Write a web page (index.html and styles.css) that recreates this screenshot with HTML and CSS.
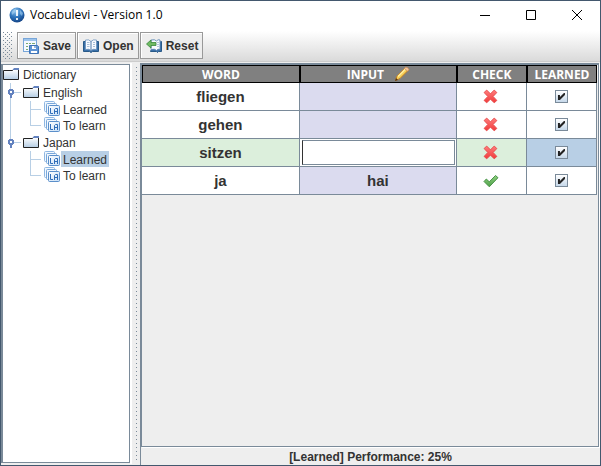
FILE: index.html
```html
<!DOCTYPE html>
<html lang="en">
<head>
<meta charset="utf-8">
<meta name="viewport" content="width=device-width, initial-scale=1">
<title>Vocabulevi - Version 1.0</title>
<link rel="stylesheet" href="styles.css">
</head>
<body>
<svg class="defs" aria-hidden="true">
  <defs>
    <linearGradient id="gFolder" x1="0" y1="0" x2="0" y2="1"><stop offset="0" stop-color="#fff"/><stop offset="1" stop-color="#b8cfe5"/></linearGradient>
    <linearGradient id="gSheet" x1="0" y1="0" x2="1" y2="1"><stop offset="0" stop-color="#fff"/><stop offset="1" stop-color="#c6def6"/></linearGradient>
    <radialGradient id="gBall" cx=".4" cy=".25" r=".8"><stop offset="0" stop-color="#8fc4ee"/><stop offset=".5" stop-color="#2f75bd"/><stop offset="1" stop-color="#123f80"/></radialGradient>
    <linearGradient id="gCheck" x1="0" y1="0" x2="0" y2="1"><stop offset="0" stop-color="#8fd07f"/><stop offset="1" stop-color="#4fa04a"/></linearGradient>
    <linearGradient id="gCross" x1="0" y1="0" x2="0" y2="1"><stop offset="0" stop-color="#ff7d7d"/><stop offset="1" stop-color="#f03a3a"/></linearGradient>
    <symbol id="folder" viewBox="0 0 16 16">
      <path d="M9 4.500 11 2h5v2.500z" fill="#6382bf"/>
      <path d="M1 4.500h8.500l1-1H15V13H1z" fill="url(#gFolder)"/>
      <path d="M.5 13.500v-9h9l1-1M.5 13.500h15V3" fill="none" stroke="#222"/>
      <path d="M11 2.500h5M10 3.500h6" stroke="#6382bf"/>
    </symbol>
    <symbol id="cards" viewBox="0 0 16 16">
      <rect x=".5" y=".5" width="10" height="10" rx="1" fill="#f2f8fe" stroke="#8fb7e2"/>
      <rect x="2.500" y="2.500" width="10" height="10" rx="1" fill="#f2f8fe" stroke="#79a8da"/>
      <rect x="4.500" y="4.500" width="11" height="10" rx="1" fill="url(#gSheet)" stroke="#5b8fca"/>
      <path d="M6.500 7v5.500H9M10.500 13V8.500l1-1h2V13M11 10.500h2" fill="none" stroke="#2f6db8"/>
    </symbol>
    <symbol id="cross" viewBox="1 1 15 15">
      <path d="M4.500 2 8 5.500 11.500 2 14 4.300 10.500 8l3.500 3.700-2.500 2.300L8 10.500 4.500 14 2 11.700 5.500 8 2 4.300z" fill="url(#gCross)" stroke="#e54848" stroke-width=".8" stroke-linejoin="round"/>
    </symbol>
    <symbol id="tick" viewBox="0 0 16 16">
      <path d="M1 8.500 3.300 6 6.300 8.800 12.500 2.500l2.500 2.200L6.300 13.800z" fill="url(#gCheck)" stroke="#3d8b3d" stroke-width=".9" stroke-linejoin="round"/>
    </symbol>
  </defs>
</svg>
<div class="window">
  <header class="titlebar">
    <svg class="icon" viewBox="0 0 16 16" aria-hidden="true"><circle cx="8" cy="8" r="7.500" fill="url(#gBall)"/><path d="M2.500 5Q4 2 7 1.500L6 5 3 8zM11 3l3 3-1 3-2-2z" fill="#b5dbf5" opacity=".55"/><path d="M8 3v6M8 11v2" stroke="#fff" stroke-width="1.800"/></svg>
    <h1 class="title">Vocabulevi - Version 1.0</h1>
    <button class="caption" type="button" aria-label="Minimize"><svg viewBox="0 0 10 10"><path d="M0 5.500h10"/></svg></button>
    <button class="caption" type="button" aria-label="Maximize"><svg viewBox="0 0 10 10"><path d="M.5.5h9v9h-9z"/></svg></button>
    <button class="caption" type="button" aria-label="Close"><svg viewBox="0 0 10 10"><path d="M0 0 10 10M10 0 0 10"/></svg></button>
  </header>
  <nav class="toolbar" aria-label="Main">
    <span class="grip"></span>
    <button class="tool" type="button"><svg class="icon" viewBox="0 0 16 16" aria-hidden="true"><rect x=".5" y=".5" width="13" height="13" fill="#f4f9ff" stroke="#78a6d8"/><path d="M1 2h12" stroke="#9dc4ec" stroke-width="2"/><path d="M3 5.500h2M6 5.500h2M9 5.500h3M3 8.500h2M3 11.500h2" stroke="#7cab72"/><path d="M6.500 7.500h8l1 1v7h-9z" fill="#5f94d4" stroke="#3e73b6"/><path d="M9 8h4v3H9zM8 13h6v2H8z" fill="#fff"/><path d="M12 8v2" stroke="#3e73b6"/></svg>Save</button>
    <button class="tool" type="button"><svg class="icon" viewBox="0 0 16 16" aria-hidden="true"><path d="M.5 3.500h15v10H9.500L8 14.500 6.500 13.500H.5z" fill="#3a70a9" stroke="#285987"/><path d="M2.500 2Q6 1 8 3.500 10 1 13.500 2v9.500Q10 10.500 8 12.500 6 10.500 2.500 11.500z" fill="#f8fbff" stroke="#6c93bd" stroke-width=".8"/><path d="M8 3.500v9" stroke="#507ba8"/><path d="M4 4.500h2.500M4 6.500h2.500M4 8.500h2.500M10 4.500h2M10 6.500h2M10 8.500h2" stroke="#a9bfd6"/></svg>Open</button>
    <button class="tool" type="button"><svg class="icon" viewBox="0 0 16 16" aria-hidden="true"><path d="M4.500 12.500v1h6l1 1 1-1h3v-10h-1" fill="#3a70a9" stroke="#285987"/><path d="M5 2q4-1 5.500 1Q12 1 14 2v9.500q-2-1-3.500 1-1.500-2-5.500-1z" fill="#f8fbff" stroke="#4f7eac" stroke-width=".8"/><path d="M12 4v6" stroke="#6f93b8" stroke-dasharray="1 1"/><path d="M.5 6 5 2v2.500h5v3H5V10z" fill="#6fba62" stroke="#37873a" stroke-width=".8"/></svg>Reset</button>
  </nav>
  <main class="split">
    <aside class="tree" aria-label="Dictionary">
      <div class="node root"><svg class="icon"><use href="#folder"/></svg><span class="label">Dictionary</span></div>
      <ul class="langs">
        <li>
          <div class="node"><svg class="icon"><use href="#folder"/></svg><span class="label">English</span></div>
          <ul class="leaves">
            <li class="node"><svg class="icon"><use href="#cards"/></svg><span class="label">Learned</span></li>
            <li class="node"><svg class="icon"><use href="#cards"/></svg><span class="label">To learn</span></li>
          </ul>
        </li>
        <li>
          <div class="node"><svg class="icon"><use href="#folder"/></svg><span class="label">Japan</span></div>
          <ul class="leaves">
            <li class="node"><svg class="icon"><use href="#cards"/></svg><span class="label selected">Learned</span></li>
            <li class="node"><svg class="icon"><use href="#cards"/></svg><span class="label">To learn</span></li>
          </ul>
        </li>
      </ul>
    </aside>
    <div class="divider"></div>
    <section class="content">
      <div class="scroll">
        <table class="words">
          <colgroup><col class="c-word"><col class="c-input"><col class="c-check"><col class="c-learned"></colgroup>
          <thead>
            <tr><th>WORD</th><th><span class="head">INPUT<svg class="icon" viewBox="0 0 16 16" aria-hidden="true"><path d="M1.500 14.500 3 10 11 2q2-1 3.500 2L6 12.500z" fill="#f7cf58" stroke="#c27f25"/><path d="M4 10.500 11.500 3" stroke="#fff0a4" stroke-width="1.500"/><path d="m10.500 2.500 1-1.300q2.500-.5 3.500 2.500l-1.500 1.500z" fill="#f4c4a0" stroke="#c98a55" stroke-width=".7"/><path d="m1 15 1-3 2 2z" fill="#553414"/></svg></span></th><th>CHECK</th><th>LEARNED</th></tr>
          </thead>
          <tbody>
            <tr><td>fliegen</td><td class="answer"></td><td><svg class="icon" role="img" aria-label="Wrong"><use href="#cross"/></svg></td><td><input type="checkbox" aria-label="fliegen learned" checked></td></tr>
            <tr><td>gehen</td><td class="answer"></td><td><svg class="icon" role="img" aria-label="Wrong"><use href="#cross"/></svg></td><td><input type="checkbox" aria-label="gehen learned" checked></td></tr>
            <tr class="current"><td>sitzen</td><td class="editing"><span class="editor"><input type="text" aria-label="Answer for sitzen"></span></td><td><svg class="icon" role="img" aria-label="Wrong"><use href="#cross"/></svg></td><td class="focus"><input type="checkbox" aria-label="sitzen learned" checked></td></tr>
            <tr><td>ja</td><td class="answer">hai</td><td><svg class="icon" role="img" aria-label="Right"><use href="#tick"/></svg></td><td><input type="checkbox" aria-label="ja learned" checked></td></tr>
          </tbody>
        </table>
      </div>
      <footer class="status">[Learned] Performance: 25%</footer>
    </section>
  </main>
</div>
</body>
</html>
```
FILE: styles.css
```css
* { box-sizing: border-box; }

body {
  margin: 0;
  font: 12px/16px "Liberation Sans", Arial, sans-serif;
  color: #333;
}

.defs { position: absolute; width: 0; height: 0; }

.icon { display: block; width: 16px; height: 16px; flex: none; }

.window {
  display: flex;
  flex-direction: column;
  height: 100vh;
  border: 1px solid #43586e;
  background: #eee;
}

/* Title bar */
.titlebar {
  display: flex;
  align-items: center;
  height: 30px;
  padding: 0 0 2px 8px;
  background: #fff;
}

.title {
  flex: 1;
  margin: 0 0 0 5px;
  font: 12px/16px "Open Sans", "Noto Sans", sans-serif;
  color: #000;
}

.caption {
  display: grid;
  place-items: center;
  width: 46px;
  height: 28px;
  padding: 0;
  border: 0;
  background: none;
}

.caption svg { width: 10px; height: 10px; fill: none; stroke: #000; }

/* Toolbar */
.toolbar {
  display: flex;
  gap: 1px;
  height: 31px;
  padding: 1px 0 2px 2px;
  border-bottom: 1px solid #ccc;
  background: linear-gradient(#fff, #dadada);
}

/* Staggered 1px dots on a 4px raster */
.grip,
.divider {
  background-image:
    conic-gradient(from 270deg at 1px 1px, #7a8a99 25%, transparent 0),
    conic-gradient(from 270deg at 1px 1px, #7a8a99 25%, transparent 0);
  background-size: 4px 4px;
  background-position: 0 0, 2px 2px;
  background-clip: content-box;
}

.grip { width: 13px; padding-right: 3px; }

.tool {
  display: flex;
  align-items: center;
  gap: 4px;
  padding: 0 4px 0 5px;
  border: 1px solid #999;
  box-shadow: inset 1px 1px #fff;
  background: #eee;
  font: bold 12px/16px "Liberation Sans", Arial, sans-serif;
  color: #333;
}

/* Split pane */
.split {
  display: flex;
  flex: 1;
  min-height: 0;
  padding-top: 1px;
}

.tree {
  width: 129px;
  margin: 1px 0 2px;
  border: 1px solid #7a8a99;
  border-left-width: 2px;
  background: #fff;
}

.tree ul { margin: 0; padding: 0; list-style: none; }

.node { display: flex; align-items: center; gap: 2px; height: 16px; }

.langs > li > .node, .root { height: 18px; }

.label { padding: 2px 2px 0; line-height: 14px; }

.selected { background: #b8cfe5; }

.langs > li { position: relative; padding-left: 20px; }

.langs > li::before {
  content: "";
  position: absolute;
  top: 0;
  bottom: 0;
  left: 7px;
  width: 10px;
  border-left: 1px solid #b8cfe5;
  background: linear-gradient(#b8cfe5, #b8cfe5) 0 9px / 10px 1px no-repeat;
}

.langs > li:last-child::before { bottom: auto; height: 10px; }

/* Expand handle: a ring with a short stem */
.langs > li::after {
  content: "";
  position: absolute;
  top: 6px;
  left: 5px;
  width: 6px;
  height: 9px;
  background:
    linear-gradient(#6382bf, #6382bf) 2px 6px / 2px 3px no-repeat,
    radial-gradient(circle at 3px 3px, #fff 1px, #6382bf 1px, #6382bf 3px, transparent 3px);
}

.leaves > li { position: relative; padding-left: 21px; gap: 1px; }

.leaves > li::before {
  content: "";
  position: absolute;
  top: 0;
  left: 7px;
  width: 10px;
  height: 100%;
  border-left: 1px solid #b8cfe5;
  background: linear-gradient(#b8cfe5, #b8cfe5) 0 8px / 10px 1px no-repeat;
}

.leaves > li:last-child::before { height: 9px; }

.divider {
  width: 10px;
  margin-bottom: 1px;
  padding: 1px 2px 1px 3px;
  border-left: 2px solid #fff;
}

.content {
  display: flex;
  flex: 1;
  flex-direction: column;
  min-width: 0;
  border-left: 1px solid #7a8a99;
}

.scroll {
  flex: 1;
  margin-right: 1px;
  border: 1px solid #7a8a99;
  border-top-width: 2px;
  box-shadow: 1px 1px #fff;
}

/* Word table */
.words {
  width: calc(100% - 1px);
  border-collapse: separate;
  border-spacing: 0;
  table-layout: fixed;
}

.c-word { width: 34.700%; }
.c-input { width: 34.500%; }
.c-check, .c-learned { width: 15.400%; }

.words th {
  height: 18px;
  padding: 2px 0 0;
  border: 1px solid #000;
  background: #808080;
  font: bold 12px/14px "Open Sans", "Noto Sans", sans-serif;
  color: #fff;
}

.head { display: flex; justify-content: center; gap: 10px; }

.head .icon { margin: -2px 0 0; }

.words td {
  height: 28px;
  padding: 0;
  border-right: 1px solid #7a8a99;
  border-bottom: 1px solid #7a8a99;
  background: #fff;
  text-align: center;
  font: bold 15px/18px "Liberation Sans", Arial, sans-serif;
}

.words td .icon { margin: 0 auto; }

.words .answer { background: #dbdbef; }
.words .current td { background: #dcefdc; }
.words .current .editing { background: #fff; }
.words .current .focus { background: #b8cfe5; }

.editor {
  display: block;
  height: 27px;
  padding: 1px 1px 1px 2px;
}

.editor input {
  display: block;
  width: 100%;
  height: 25px;
  padding: 0 2px;
  border: 1px solid #7a8a99;
  border-left-color: #333;
  outline: 0;
  background: #fff;
  font: inherit;
  text-align: left;
}

input[type="checkbox"] {
  appearance: none;
  display: block;
  width: 13px;
  height: 13px;
  margin: 0 auto;
  border: 1px solid #7a8a99;
  background: linear-gradient(#fff, #c6d8ea);
}

input[type="checkbox"]:checked::before {
  content: "";
  display: block;
  width: 11px;
  height: 11px;
  background: #222;
  clip-path: polygon(2px 4px, 4px 4px, 4px 6px, 8px 2px, 9px 2px, 9px 4px, 4px 9px, 2px 9px);
}

.status {
  height: 18px;
  padding-top: 2px;
  text-align: center;
  font-weight: bold;
}
```
